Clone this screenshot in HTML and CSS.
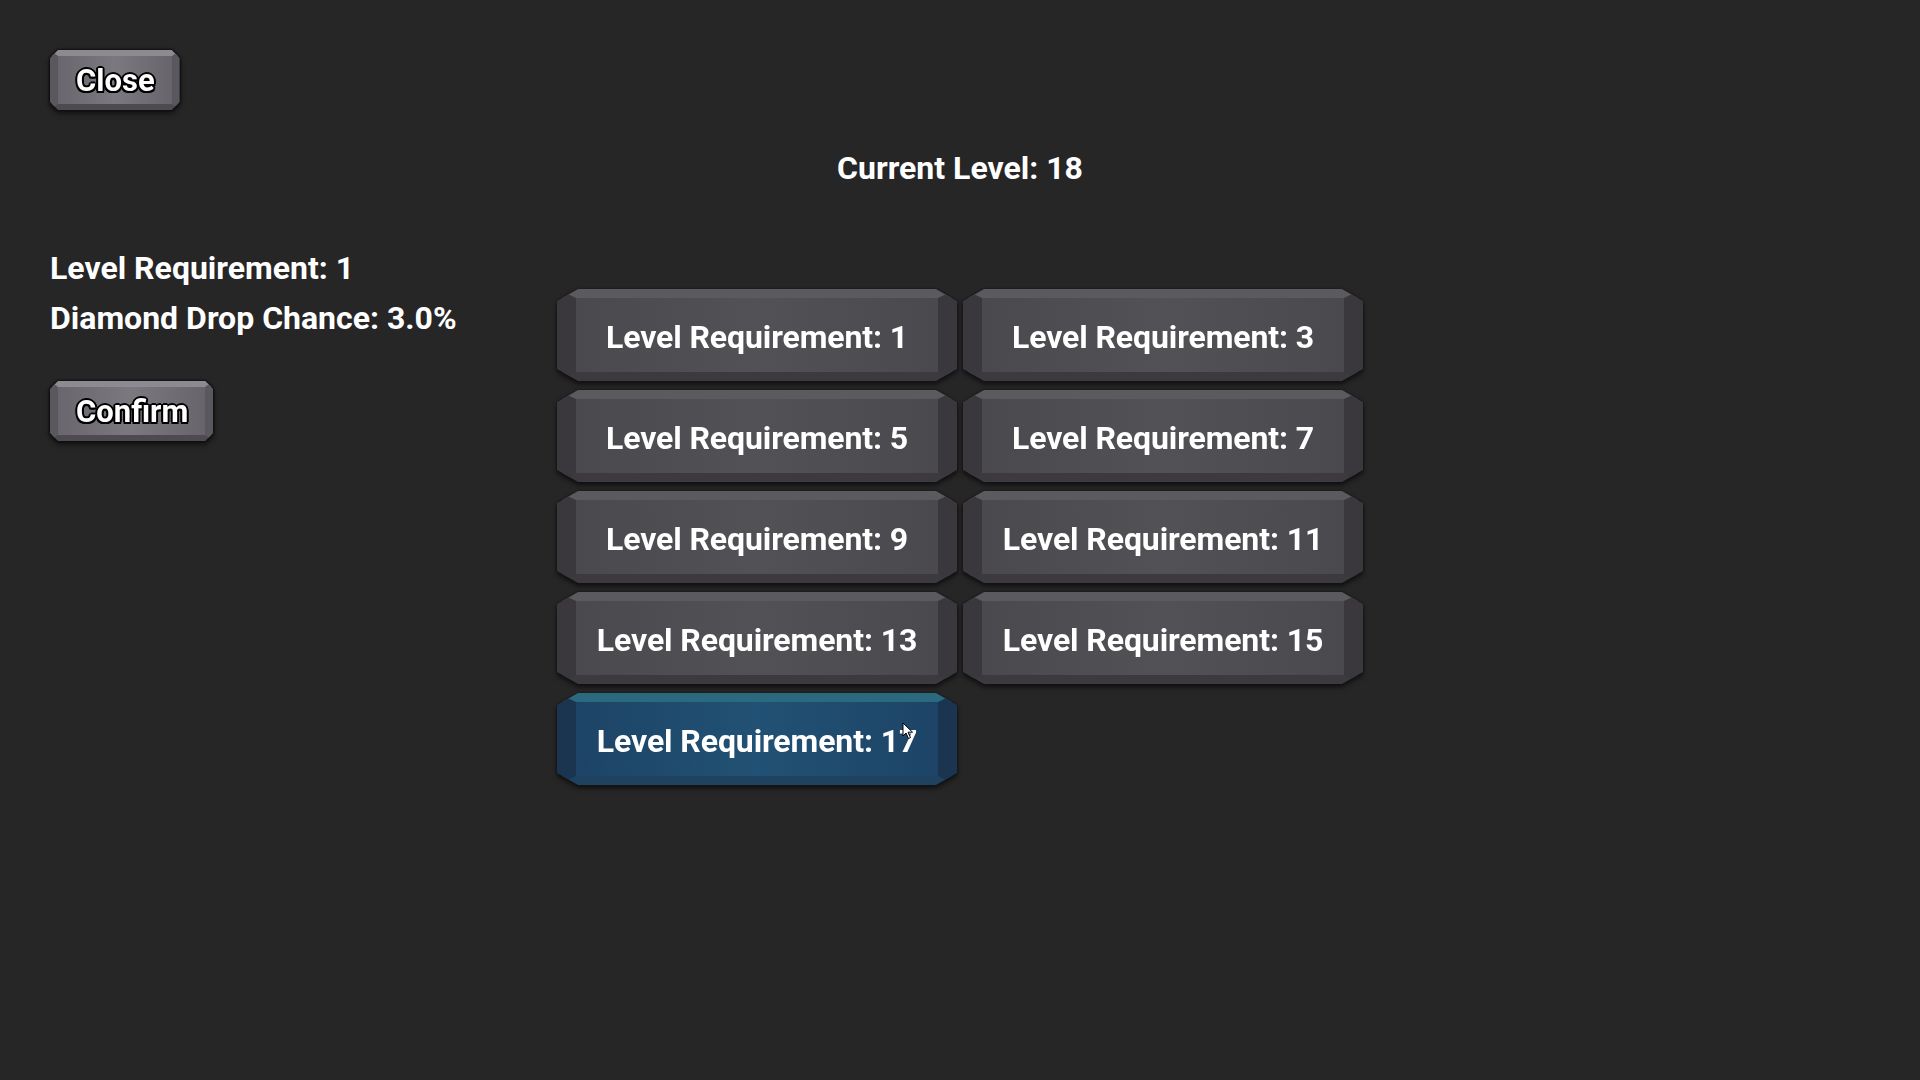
FILE: index.html
```html
<!DOCTYPE html>
<html lang="en">
<head>
  <meta charset="UTF-8" />
  <meta name="viewport" content="width=device-width, initial-scale=1.0"/>
  <title>Level Select</title>
  <link rel="stylesheet" href="styles.css">
</head>
<body>
  <div class="screen">
    <div class="top-bar">
      <button class="small-btn"><span class="face">Close</span></button>
    </div>

    <h1 class="current-level">Current Level: 18</h1>

    <div class="main">
      <section class="info">
        <p>Level Requirement: 1</p>
        <p>Diamond Drop Chance: 3.0%</p>
        <button class="small-btn confirm"><span class="face">Confirm</span></button>
      </section>

      <div class="level-grid">
        <button class="level-btn"><span class="face">Level Requirement: 1</span></button>
        <button class="level-btn"><span class="face">Level Requirement: 3</span></button>
        <button class="level-btn"><span class="face">Level Requirement: 5</span></button>
        <button class="level-btn"><span class="face">Level Requirement: 7</span></button>
        <button class="level-btn"><span class="face">Level Requirement: 9</span></button>
        <button class="level-btn"><span class="face">Level Requirement: 11</span></button>
        <button class="level-btn"><span class="face">Level Requirement: 13</span></button>
        <button class="level-btn"><span class="face">Level Requirement: 15</span></button>
        <button class="level-btn hovered"><span class="face">Level Requirement: 17</span></button>
      </div>
    </div>

    <!-- mouse pointer -->
    <svg class="pointer" width="12" height="18" viewBox="0 0 12 18">
      <path d="M1 1 L1 14 L4 11 L6.5 16.5 L8.5 15.6 L6 10.2 L10.5 10.2 Z" fill="#fff" stroke="#000" stroke-width="1" stroke-linejoin="round"/>
    </svg>
  </div>
</body>
</html>
```

FILE: styles.css
```css
* { box-sizing: border-box; }

html, body {
  margin: 0;
  height: 100%;
}

body {
  background: #262626;
  color: #fff;
  font-family: 'Roboto', 'Liberation Sans', sans-serif;
  font-weight: 700;
  overflow: hidden;
}

.screen {
  position: relative;
  height: 100%;
  padding: 50px 0 0 50px;
}

button {
  font: inherit;
  color: inherit;
  padding: 0;
  border: 0;
  background: none;
  cursor: pointer;
}

/* small grey buttons with outlined text */
.small-btn {
  display: inline-block;
  filter: drop-shadow(0 0 1px #0d0d0d) drop-shadow(0 0 1px #0d0d0d) drop-shadow(0 3px 2px rgba(0,0,0,0.5));
}

.small-btn .face {
  display: flex;
  align-items: center;
  justify-content: center;
  height: 60px;
  padding: 0 17px 0 18px;
  border-style: solid;
  border-width: 6px 8px 6px 8px;
  border-color: #8d8a91 #5a575e #4d4a51 #5a575e;
  background: linear-gradient(90deg, #6a666e, #7c7880 50%, #68646c);
  clip-path: polygon(8px 0, calc(100% - 8px) 0, 100% 8px, 100% calc(100% - 8px), calc(100% - 8px) 100%, 8px 100%, 0 calc(100% - 8px), 0 8px);
  font-size: 31px;
  text-shadow:
    2px 0 #000, -2px 0 #000, 0 2px #000, 0 -2px #000,
    1.5px 1.5px #000, -1.5px 1.5px #000, 1.5px -1.5px #000, -1.5px -1.5px #000;
}

.current-level {
  margin: 38px 0 0 -50px;
  text-align: center;
  font-size: 32px;
  line-height: 40px;
  font-weight: 700;
}

.main {
  display: flex;
  margin-top: 55px;
}

.info {
  width: 507px;
}

.info p {
  margin: 0;
  font-size: 32px;
  line-height: 50px;
}

.confirm {
  margin-top: 38px;
}

.level-grid {
  margin-top: 46px;
  display: grid;
  grid-template-columns: repeat(2, 400px);
  grid-auto-rows: 92px;
  column-gap: 6px;
  row-gap: 9px;
  align-self: flex-start;
}

/* bevelled panels for each level */
.level-btn {
  display: block;
  filter: drop-shadow(0 0 1px #111) drop-shadow(0 3px 2px rgba(0,0,0,0.55));
}

.level-btn .face {
  display: flex;
  align-items: center;
  justify-content: center;
  height: 92px;
  border-style: solid;
  border-width: 9px 19px 9px 19px;
  border-color: #5b5a5e #3a383c #3c3a3e #3a383c;
  background: linear-gradient(90deg, #4a494d, #525155 50%, #4a494d);
  clip-path: polygon(21px 0, calc(100% - 21px) 0, 100% 12px, 100% calc(100% - 12px), calc(100% - 21px) 100%, 21px 100%, 0 calc(100% - 12px), 0 12px);
  font-size: 32px;
  letter-spacing: -0.1px;
  padding-top: 4px;
}

.level-btn.hovered .face {
  border-color: #2b6a7e #1b3551 #1f4260 #1b3551;
  background: linear-gradient(90deg, #1d4466, #215174 50%, #1d4466);
}

.pointer {
  position: absolute;
  left: 902px;
  top: 722px;
}
```
